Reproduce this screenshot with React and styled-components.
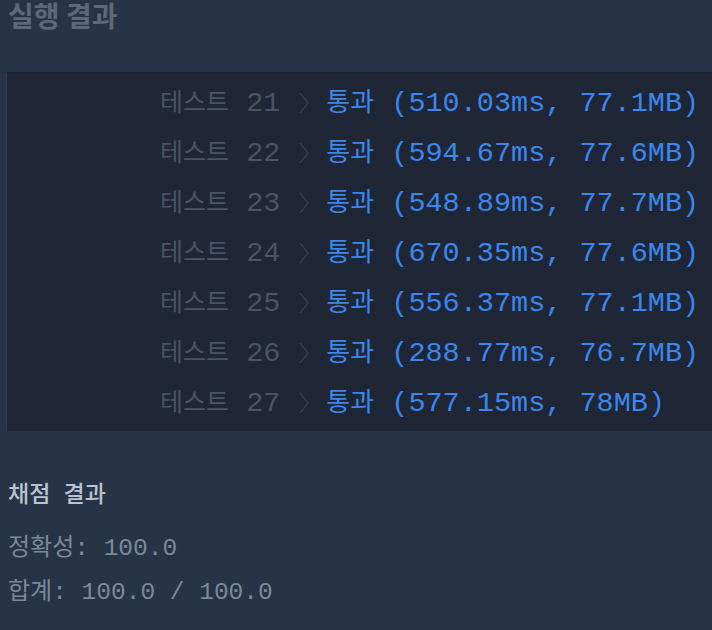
import styled, { createGlobalStyle } from "styled-components";

const results = [
  { no: 21, time: "510.03ms", mem: "77.1MB" },
  { no: 22, time: "594.67ms", mem: "77.6MB" },
  { no: 23, time: "548.89ms", mem: "77.7MB" },
  { no: 24, time: "670.35ms", mem: "77.6MB" },
  { no: 25, time: "556.37ms", mem: "77.1MB" },
  { no: 26, time: "288.77ms", mem: "76.7MB" },
  { no: 27, time: "577.15ms", mem: "78MB" },
];

const Chevron = () => (
  <svg width="12" height="22" viewBox="0 0 12 22">
    <path d="M2 1 L10 11 L2 21" fill="none" stroke="#363f4e" strokeWidth="1.5" />
  </svg>
);

const App = () => {
  return (
    <Page>
      <GlobalStyle />
      <Title>실행 결과</Title>
      <Console>
        {results.map((r) => (
          <Row key={r.no}>
            <Label>
              <Ko $size={25}>테스트</Ko> {r.no}
            </Label>
            <Arrow>
              <Chevron />
            </Arrow>
            <Pass>
              <Ko $size={26}>통과</Ko> ({r.time}, {r.mem})
            </Pass>
          </Row>
        ))}
      </Console>
      <Summary>
        <SummaryTitle>
          <Ko $size={23}>채점</Ko> <Ko $size={23}>결과</Ko>
        </SummaryTitle>
        <Line>
          <Ko $size={24}>정확성</Ko>: 100.0
        </Line>
        <Line>
          <Ko $size={24}>합계</Ko>: 100.0 / 100.0
        </Line>
      </Summary>
    </Page>
  );
};

const GlobalStyle = createGlobalStyle`
  body {
    margin: 0;
    background: #273445;
    overflow: hidden;
  }
`;

const Page = styled.div`
  width: 712px;
  height: 630px;
  background: #273445;
  font-family: "Liberation Mono", "Noto Sans CJK KR", monospace;
`;

const Ko = styled.span`
  font-family: "Noto Sans CJK KR", sans-serif;
  font-size: ${({ $size }) => $size}px;
  line-height: 1;
`;

const Title = styled.h2`
  margin: 0;
  padding: 1px 0 0 8px;
  height: 70px;
  box-sizing: border-box;
  font-family: "Noto Sans CJK KR", sans-serif;
  font-size: 28px;
  line-height: 28px;
  font-weight: 700;
  color: #5d6878;
`;

const Console = styled.div`
  margin: 2px 0 0 6px;
  padding: 5px 0 2px;
  background: #1f2636;
  border-top: 1px solid #1a2030;
  border-left: 1px solid #35404f;
  border-bottom: 1px solid #1c2332;
`;

const Row = styled.div`
  display: flex;
  align-items: center;
  height: 50px;
  padding-left: 153px;
  font-size: 28.5px;
  line-height: 1;
  white-space: pre;
`;

const Label = styled.span`
  color: #4a5465;
`;

const Arrow = styled.span`
  display: flex;
  margin: 0 16px 0 18px;
`;

const Pass = styled.span`
  color: #3b87ec;
`;

const Summary = styled.div`
  padding: 50px 0 0 8px;
`;

const SummaryTitle = styled.div`
  font-size: 22px;
  line-height: 30px;
  color: #b9c2ce;
  font-weight: 500;
  white-space: pre;
  margin-bottom: 15px;
`;

const Line = styled.div`
  font-size: 24.5px;
  line-height: 44px;
  color: #7b8999;
  white-space: pre;
`;

export default App;
